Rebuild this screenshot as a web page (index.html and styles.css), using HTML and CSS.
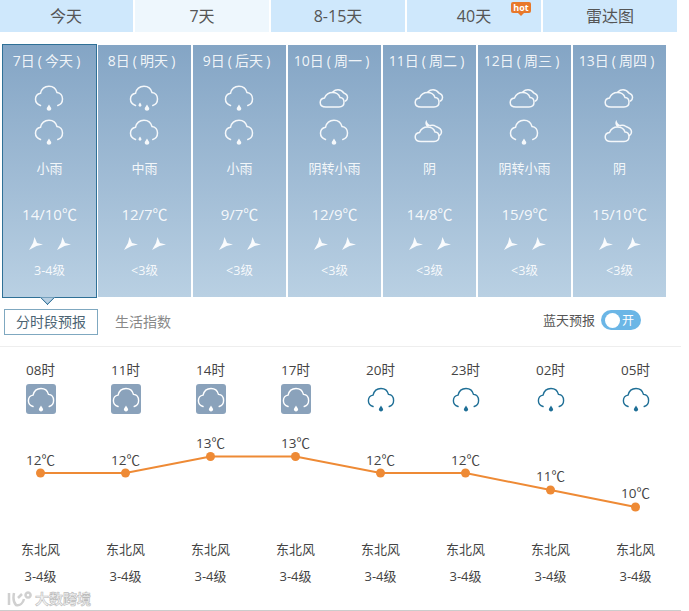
FILE: index.html
```html
<!DOCTYPE html>
<html>
<head>
<meta charset="utf-8">
<title>7天天气预报</title>
<link rel="stylesheet" href="styles.css">
</head>
<body>
	<svg class="defs" width="0" height="0">
		<symbol id="rain" viewBox="0 0 30 26">
			<path class="line" d="M6.500 20.500C3.500 19.500 1.500 17 1.500 14.300C1.500 11 3.800 8.800 6.500 8.300C7.500 3.800 11 1.200 15 1.200C19 1.200 22 3.600 23 7.500C26.300 7.800 28.500 10.500 28.500 14C28.500 17 26.800 19.500 23.800 20.500"/>
			<path class="drop" d="M15 19.500C16 21.500 17.300 22.500 17.300 23.800C17.300 25 16.200 25.800 15 25.800C13.800 25.800 12.700 25 12.700 23.800C12.700 22.500 14 21.500 15 19.500Z"/>
		</symbol>
		<symbol id="rain2" viewBox="0 0 30 26">
			<path class="line" d="M6.500 20.500C3.500 19.500 1.500 17 1.500 14.300C1.500 11 3.800 8.800 6.500 8.300C7.500 3.800 11 1.200 15 1.200C19 1.200 22 3.600 23 7.500C26.300 7.800 28.500 10.500 28.500 14C28.500 17 26.800 19.500 23.800 20.500"/>
			<path class="drop" d="M18 19.500C19 21.500 20.300 22.500 20.300 23.800C20.300 25 19.200 25.800 18 25.800C16.800 25.800 15.700 25 15.700 23.800C15.700 22.500 17 21.500 18 19.500Z"/>
			<path class="drop" d="M11 17.500C11.700 18.800 12.500 19.400 12.500 20.300C12.500 21.100 11.800 21.700 11 21.700C10.200 21.700 9.500 21.100 9.500 20.300C9.500 19.400 10.300 18.800 11 17.500Z"/>
		</symbol>
		<symbol id="cloud" viewBox="0 0 30 26">
			<path class="line" d="M7 22C3.500 22 1.200 20.300 1.200 17.500C1.200 15 3 13.300 5.500 13C7 9.500 10 7.500 13.500 7.500C17 7.500 20 9.500 21 12.500C24 12.700 25 15 25 17.300C25 20.300 23 22 20 22Z"/>
			<path class="line" d="M14 6.800C15.500 5.300 17 4.800 19 4.800C21.500 4.800 23.500 6 24.800 8C27 8.800 28.500 10.500 28.500 12.500C28.500 14 27.800 15.200 26.500 16"/>
		</symbol>
		<symbol id="moon" viewBox="0 0 30 26">
			<path class="line" d="M7 22.500C3.500 22.500 1.200 20.800 1.200 18C1.200 15.500 3 13.800 5.500 13.500C7 10 10 8 13.500 8C17 8 20 10 21 13C24 13.200 25 15.500 25 17.800C25 20.800 23 22.500 20 22.500Z"/>
			<path class="line" d="M16.500 6.500C18.500 6 20.500 6.500 22 7.500C25 8.500 27.500 10.500 27.500 13C27.500 14.500 26.800 15.700 25.500 16.500"/>
			<path class="drop" d="M12.500 1C12.800 3.500 14 5.500 17 6.300L13.500 7.800C11 6.500 10.800 3 12.500 1Z"/>
		</symbol>
		<symbol id="wind" viewBox="0 0 14 13">
			<path class="arrow" d="M5.500 0L8 6L14 7.500L7.500 9L0 13L4 6Z"/>
		</symbol>
	</svg>

	<div class="wrap">
		<ul class="tabs">
			<li>今天</li>
			<li class="on">7天</li>
			<li>8-15天</li>
			<li>40天<span class="hot">hot</span></li>
			<li>雷达图</li>
		</ul>

		<ul class="days">
			<li class="day on">
				<h2>7日 ( 今天 )</h2>
				<svg class="ico"><use href="#rain"/></svg>
				<svg class="ico"><use href="#rain"/></svg>
				<p class="wea">小雨</p>
				<p class="tem">14/10℃</p>
				<div class="winds"><svg><use href="#wind"/></svg><svg><use href="#wind"/></svg></div>
				<p class="lv">3-4级</p>
			</li>
			<li class="day">
				<h2>8日 ( 明天 )</h2>
				<svg class="ico"><use href="#rain2"/></svg>
				<svg class="ico"><use href="#rain2"/></svg>
				<p class="wea">中雨</p>
				<p class="tem">12/7℃</p>
				<div class="winds"><svg><use href="#wind"/></svg><svg><use href="#wind"/></svg></div>
				<p class="lv">&lt;3级</p>
			</li>
			<li class="day">
				<h2>9日 ( 后天 )</h2>
				<svg class="ico"><use href="#rain"/></svg>
				<svg class="ico"><use href="#rain"/></svg>
				<p class="wea">小雨</p>
				<p class="tem">9/7℃</p>
				<div class="winds"><svg><use href="#wind"/></svg><svg><use href="#wind"/></svg></div>
				<p class="lv">&lt;3级</p>
			</li>
			<li class="day">
				<h2>10日 ( 周一 )</h2>
				<svg class="ico"><use href="#cloud"/></svg>
				<svg class="ico"><use href="#rain"/></svg>
				<p class="wea">阴转小雨</p>
				<p class="tem">12/9℃</p>
				<div class="winds"><svg><use href="#wind"/></svg><svg><use href="#wind"/></svg></div>
				<p class="lv">&lt;3级</p>
			</li>
			<li class="day">
				<h2>11日 ( 周二 )</h2>
				<svg class="ico"><use href="#cloud"/></svg>
				<svg class="ico"><use href="#moon"/></svg>
				<p class="wea">阴</p>
				<p class="tem">14/8℃</p>
				<div class="winds"><svg><use href="#wind"/></svg><svg><use href="#wind"/></svg></div>
				<p class="lv">&lt;3级</p>
			</li>
			<li class="day">
				<h2>12日 ( 周三 )</h2>
				<svg class="ico"><use href="#cloud"/></svg>
				<svg class="ico"><use href="#rain"/></svg>
				<p class="wea">阴转小雨</p>
				<p class="tem">15/9℃</p>
				<div class="winds"><svg><use href="#wind"/></svg><svg><use href="#wind"/></svg></div>
				<p class="lv">&lt;3级</p>
			</li>
			<li class="day">
				<h2>13日 ( 周四 )</h2>
				<svg class="ico"><use href="#cloud"/></svg>
				<svg class="ico"><use href="#moon"/></svg>
				<p class="wea">阴</p>
				<p class="tem">15/10℃</p>
				<div class="winds"><svg><use href="#wind"/></svg><svg><use href="#wind"/></svg></div>
				<p class="lv">&lt;3级</p>
			</li>
		</ul>

		<div class="tools">
			<a class="sub on">分时段预报</a>
			<a class="sub">生活指数</a>
			<span class="blue">蓝天预报</span>
			<span class="toggle"><i></i>开</span>
		</div>

		<ul class="hours">
			<li><p>08时</p><span class="box"><svg><use href="#rain"/></svg></span></li>
			<li><p>11时</p><span class="box"><svg><use href="#rain"/></svg></span></li>
			<li><p>14时</p><span class="box"><svg><use href="#rain"/></svg></span></li>
			<li><p>17时</p><span class="box"><svg><use href="#rain"/></svg></span></li>
			<li><p>20时</p><span class="box night"><svg><use href="#rain"/></svg></span></li>
			<li><p>23时</p><span class="box night"><svg><use href="#rain"/></svg></span></li>
			<li><p>02时</p><span class="box night"><svg><use href="#rain"/></svg></span></li>
			<li><p>05时</p><span class="box night"><svg><use href="#rain"/></svg></span></li>
		</ul>

		<svg class="chart" width="680" height="100" viewBox="0 0 680 100">
			<polyline points="40.500,59 125.500,59 210.500,42.500 295.500,42.500 380.500,59 465.500,59 550.500,76 635.500,93"/>
			<circle cx="40.500" cy="59" r="4.500"/>
			<circle cx="125.500" cy="59" r="4.500"/>
			<circle cx="210.500" cy="42.500" r="4.500"/>
			<circle cx="295.500" cy="42.500" r="4.500"/>
			<circle cx="380.500" cy="59" r="4.500"/>
			<circle cx="465.500" cy="59" r="4.500"/>
			<circle cx="550.500" cy="76" r="4.500"/>
			<circle cx="635.500" cy="93" r="4.500"/>
			<text x="40.500" y="51">12℃</text>
			<text x="125.500" y="51">12℃</text>
			<text x="210.500" y="34">13℃</text>
			<text x="295.500" y="34">13℃</text>
			<text x="380.500" y="51">12℃</text>
			<text x="465.500" y="51">12℃</text>
			<text x="550.500" y="67">11℃</text>
			<text x="635.500" y="84">10℃</text>
		</svg>

		<ul class="hours wind_row">
			<li><p>东北风</p><p>3-4级</p></li>
			<li><p>东北风</p><p>3-4级</p></li>
			<li><p>东北风</p><p>3-4级</p></li>
			<li><p>东北风</p><p>3-4级</p></li>
			<li><p>东北风</p><p>3-4级</p></li>
			<li><p>东北风</p><p>3-4级</p></li>
			<li><p>东北风</p><p>3-4级</p></li>
			<li><p>东北风</p><p>3-4级</p></li>
		</ul>

		<div class="mark">
			<svg width="26" height="17" viewBox="0 0 26 17"><path d="M2 3V15M7 3C6 8 6 12 9 15C13 16 16 13 17 9M11 8L15 4M21 2.500A2.500 2.500 0 1 0 21.100 2.500Z"/></svg>
			<span>大数跨境</span>
		</div>
	</div>
</body>
</html>
```

FILE: styles.css
```css
*{ margin: 0; padding: 0; box-sizing: border-box;}
body{ background: #fff; color: #444; font-family: "Open Sans", "Noto Sans CJK SC", sans-serif; font-size: 13px;}
ul{ list-style: none;}
h2{ font-weight: normal;}
.defs{ display: block; height: 0;}

.wrap{ width: 681px; height: 611px; position: relative; border-bottom: 1px solid #ccc;}

.tabs{ display: flex; gap: 2px; margin-left: -1px; height: 32px;}
.tabs li{ width: 134px; background: #cfe8fc; color: #555; font-size: 16px; line-height: 32px; text-align: center; position: relative;}
.tabs li.on{ background: #eef7fd;}
.hot{ position: absolute; top: 2px; left: 104px; width: 20px; height: 11px; border-radius: 2px; background: #e8782a; color: #fff; font-size: 9px; font-weight: bold; line-height: 11px;}
.hot:after{ content: ""; position: absolute; left: 7px; top: 11px; border: 3px solid transparent; border-top-color: #e8782a; border-bottom: 0;}

.days{ display: flex; gap: 2px; margin: 13px 0 0 3px; height: 252px;}
.day{ width: 93px; position: relative; text-align: center; color: rgba(255,255,255,.9); background: linear-gradient(#84a5c5, #b9d0e3); padding-top: 6px;}
.day.on{ box-shadow: 0 0 0 1px #2f7096;}
.day.on:after{ content: ""; position: absolute; left: 39px; top: 247px; width: 10px; height: 10px; background: #b9d0e3; border-right: 1px solid #2f7096; border-bottom: 1px solid #2f7096; transform: rotate(45deg); clip-path: polygon(100% 0, 100% 100%, 0 100%);}
.day h2{ font-size: 14px; line-height: 20px; white-space: nowrap; word-spacing: -.5px; padding-right: 6px; margin-left: -3px; margin-right: -3px;}
.ico{ display: block; width: 30px; height: 26px; margin: 8px auto 0 31px;}
.day h2 + .ico{ margin-top: 14px;}
.wea{ margin-top: 13px; line-height: 20px; font-size: 13px;}
.tem{ margin-top: 26px; line-height: 20px; font-size: 15px;}
.winds{ display: flex; justify-content: center; gap: 14px; margin-top: 13px; height: 14px;}
.winds svg{ width: 14px; height: 13px;}
.lv{ margin-top: 10px; line-height: 20px; font-size: 12.5px;}

.line{ fill: none; stroke: currentColor; stroke-width: 1.500; stroke-linecap: round;}
.drop{ fill: currentColor;}
.arrow{ fill: #fff; opacity: .92;}

.tools{ display: flex; align-items: center; height: 50px; padding: 12px 0 11px 4px; border-bottom: 1px solid #eee;}
.sub{ font-size: 14px; line-height: 24px; color: #888;}
.sub.on{ width: 94px; height: 26px; margin-right: 17px; border: 1px solid #7fa8c0; color: #4c6473; text-align: center;}
.blue{ margin: 0 0 6px auto; font-size: 13px; color: #555;}
.toggle{ display: flex; align-items: center; width: 40px; height: 20px; margin: 0 40px 4px 6px; padding: 0 0 0 4px; border-radius: 10px; background: #6bb6e6; color: #fff; font-size: 12px;}
.toggle i{ width: 15px; height: 15px; margin-right: 2px; border-radius: 50%; background: #fff;}

.hours{ display: grid; grid-template-columns: repeat(8, 85px); margin: 13px 0 0 -2px; text-align: center;}
.hours p{ line-height: 20px; font-size: 13.5px;}
.box{ display: flex; align-items: center; justify-content: center; width: 30px; height: 30px; margin: 4px auto 0; border-radius: 3px; background: #8aa2bb; color: #fff;}
.box.night{ background: none; color: #1f6f96;}
.box svg{ width: 28px; height: 25px;}

.chart{ display: block;}
.chart polyline{ fill: none; stroke: #ee8a35; stroke-width: 2;}
.chart circle{ fill: #ee8a35;}
.chart text{ fill: #444; font-size: 13.5px; text-anchor: middle;}

.wind_row{ margin-top: 25px;}
.wind_row li{ display: flex; flex-direction: column; gap: 7px;}
.wind_row p{ font-size: 13px;}

.mark{ position: absolute; left: 7px; top: 588px; display: flex; align-items: center; gap: 2px; color: #f2f2f2; font-size: 14px; font-weight: bold; -webkit-text-stroke: .6px #bbb;}
.mark svg{ fill: none; stroke: #d0d0d0; stroke-width: 2.500;}
```
